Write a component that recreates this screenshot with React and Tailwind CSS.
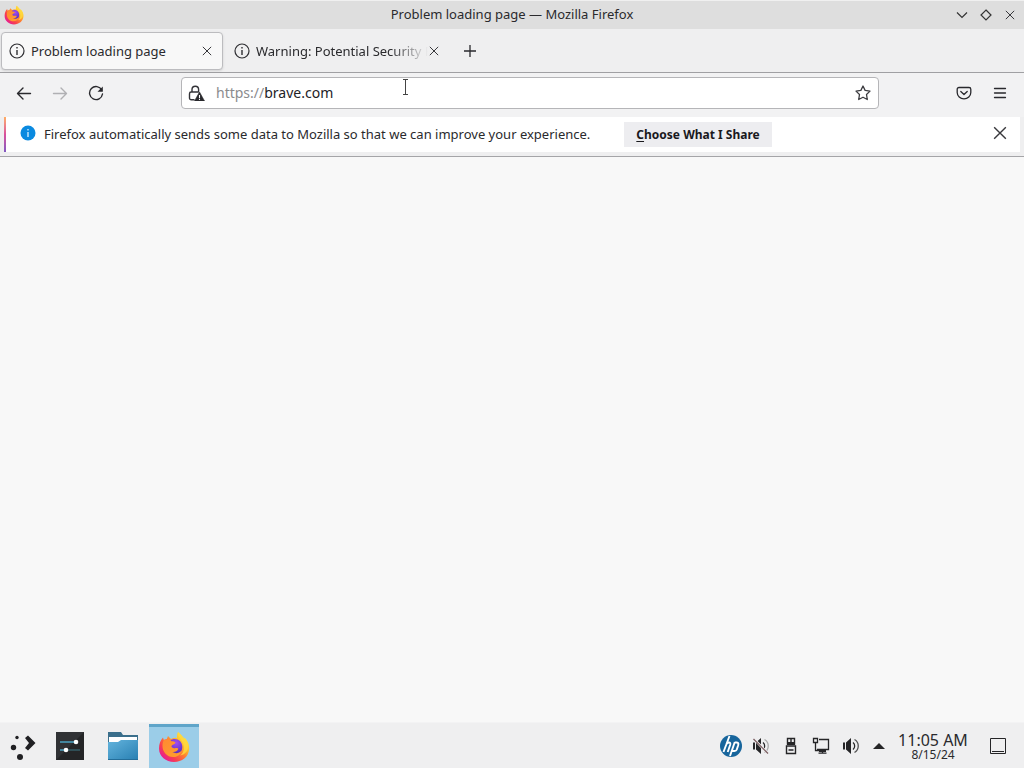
import React from "react";

const iconButton = "flex size-8 shrink-0 items-center justify-center";

function FirefoxLogo({ id, className }) {
  return (
    <svg viewBox="0 0 32 32" className={className} aria-hidden="true">
      <defs>
        <linearGradient id={id + "body"} x1="0.9" y1="0.1" x2="0.15" y2="0.85">
          <stop offset="0" stopColor="#fff04a" />
          <stop offset="0.28" stopColor="#ffc12c" />
          <stop offset="0.52" stopColor="#ff7a32" />
          <stop offset="0.78" stopColor="#f8404f" />
          <stop offset="1" stopColor="#e8208a" />
        </linearGradient>
        <radialGradient id={id + "globe"} cx="0.6" cy="0.25" r="0.8">
          <stop offset="0" stopColor="#a24df0" />
          <stop offset="0.6" stopColor="#6a35cf" />
          <stop offset="1" stopColor="#4b2aa5" />
        </radialGradient>
        <linearGradient id={id + "fox"} x1="0" y1="0" x2="1" y2="1">
          <stop offset="0" stopColor="#ff8a32" />
          <stop offset="1" stopColor="#ffa02c" />
        </linearGradient>
      </defs>
      <path
        d="M20 1c3 2 4.500 5 5 7l2-1c3 3 4.500 7 4.200 11C30.600 26 24 31 16 31S1 25.500 1 17.500C1 13 2.500 9 5 6.500l.8 2.500 3-1 1.200-3 3 3c2-1 4-1.500 6-1-.3-2 0-4 1-6z"
        fill={"url(#" + id + "body)"}
      />
      <path
        d="M12.500 9.500c2.500-2.300 7-2 9.500.5 2.800 3 3.200 8 .5 11.200-2.700 3.300-8.500 3.500-11.500.5-2-2-2.500-4-2-6z"
        fill={"url(#" + id + "globe)"}
      />
      <path
        d="M5.800 9c3-1.300 5.800-.8 7.700 1.200 1.800 0 3.400.4 4 1.300-.5 1.900-3.500 2-4 3.500-.2 1.500 1.600 2.600 3.500 2.200 1.500-.4 3-.2 3.400.6-1.200 2.600-3.500 3.600-6 3.200 3.300 2 7 1.200 9-1.300-.8 4-4 6.300-8.400 6.300C9 26 4.500 21 4.500 15c0-2.500.5-4.500 1.300-6z"
        fill={"url(#" + id + "fox)"}
      />
      <path
        d="M20 1c-1 5 5.500 8 6 15 .2 4-1.500 7-4 8.500 5.500-1 9-5.500 8-11.500C28.500 8 24 5 20 1z"
        fill="#ffd83d"
        opacity="0.85"
      />
    </svg>
  );
}

function InfoOutline() {
  return (
    <svg viewBox="0 0 16 16" className="size-4 shrink-0" fill="none" stroke="#2e2e32" aria-hidden="true">
      <circle cx="8" cy="8" r="7" strokeWidth="1.200" />
      <path d="M8 7v5" strokeWidth="1.400" />
      <path d="M8 4v1.500" strokeWidth="1.400" />
    </svg>
  );
}

function Cross({ className }) {
  return (
    <svg viewBox="0 0 12 12" className={className} fill="none" stroke="#38383c" strokeWidth="1.200" aria-hidden="true">
      <path d="M1 1l10 10M11 1L1 11" />
    </svg>
  );
}

function Tab({ title, active }) {
  return (
    <div
      className={
        active
          ? "mr-[3px] ml-px flex h-[38px] w-[222px] items-center rounded border border-[#bcbcbf] bg-[#f8f8f8] pr-[9px] pl-[7px] shadow-sm"
          : "flex h-[38px] w-[222px] items-center pr-2 pl-2"
      }
    >
      <InfoOutline />
      <button role="tab" aria-selected={active} className="ml-1.5 min-w-0 flex-1 pt-0.5 text-left whitespace-nowrap">
        <span className={active ? "block" : "block overflow-hidden [mask-image:linear-gradient(to_right,black_78%,transparent)]"}>{title}</span>
      </button>
      <button aria-label="Close tab" className="flex h-4 w-3 shrink-0 items-center justify-center">
        <Cross className="size-2.5" />
      </button>
    </div>
  );
}

function TitleBar() {
  return (
    <header className="grid h-[29px] grid-cols-[1fr_auto_1fr] items-center border-t border-[#f0f0f0] bg-[#dedede]">
      <FirefoxLogo id="window" className="ml-1 size-5" />
      <h1>Problem loading page — Mozilla Firefox</h1>
      <div className="flex justify-end pr-0.5">
        <button aria-label="Minimize" className="flex size-6 items-center justify-center">
          <svg viewBox="0 0 12 12" className="size-3" fill="none" stroke="#333" strokeWidth="1.200"><path d="M1 3.500l5 5 5-5" /></svg>
        </button>
        <button aria-label="Maximize" className="flex size-6 items-center justify-center">
          <svg viewBox="0 0 12 12" className="size-3" fill="none" stroke="#333" strokeWidth="1.200"><path d="M6 1l5 5-5 5-5-5z" /></svg>
        </button>
        <button aria-label="Close window" className="flex size-6 items-center justify-center"><Cross className="size-2.5" /></button>
      </div>
    </header>
  );
}

function NavBar() {
  return (
    <nav className="flex h-11 items-center bg-[#f2f2f3] px-2 pb-1">
      <div className="flex gap-1">
        <button aria-label="Back" className={iconButton}>
          <svg viewBox="0 0 16 16" className="size-4" fill="none" stroke="#29292d" strokeWidth="1.400" strokeLinecap="round" strokeLinejoin="round"><path d="M14.500 8.500H1.500M7 3L1.500 8.500 7 14" /></svg>
        </button>
        <button aria-label="Forward" disabled className={iconButton}>
          <svg viewBox="0 0 16 16" className="size-4" fill="none" stroke="#b0b0b3" strokeWidth="1.400" strokeLinecap="round" strokeLinejoin="round"><path d="M1.500 8.500h13M9 3l5.500 5.500L9 14" /></svg>
        </button>
        <button aria-label="Reload" className={iconButton}>
          <svg viewBox="0 0 16 16" className="size-4" fill="none" stroke="#29292d" strokeWidth="1.400" strokeLinecap="round"><path d="M13.800 5A6.500 6.500 0 1 0 14.500 9" /><path d="M14.800 1.500v5.300H9.500z" fill="#29292d" stroke="none" /></svg>
        </button>
      </div>
      <div className="relative mr-[69px] ml-[69px] flex h-8 min-w-0 flex-1 items-center rounded border border-[#b5b5b8] bg-white pr-[7px] pl-1.5 text-sm">
        <button aria-label="Connection is not secure" className="shrink-0">
          <svg viewBox="0 0 18 16" className="h-4 w-[18px]" fill="none" stroke="#333338" strokeWidth="1.400">
            <path d="M4 7V4.500a3.300 3.300 0 0 1 6.600 0V7M6.500 14.700H3.200A1.700 1.700 0 0 1 1.500 13V8.700C1.500 7.700 2.300 7 3.200 7h7.600" />
            <path d="M11.500 7l5 9h-10z" fill="#29292d" stroke="#29292d" strokeWidth=".6" strokeLinejoin="round" />
            <path d="M11.500 10v3M11.500 13.800V15" stroke="#fff" strokeWidth="1.100" />
          </svg>
        </button>
        <label htmlFor="address" className="ml-2.5 text-[#8b8b8e]">https://</label>
        <input id="address" defaultValue="brave.com" spellCheck={false} className="min-w-0 flex-1 bg-transparent text-[#222226] outline-none" />
        <button aria-label="Bookmark this page" className="shrink-0">
          <svg viewBox="0 0 16 16" className="size-4" fill="none" stroke="#3c3c40" strokeWidth="1.300" strokeLinejoin="round"><path d="M8 1l2.100 4.400 4.900.7-3.500 3.400.8 5L8 12.200l-4.300 2.300.8-5L1 6.100l4.900-.7z" /></svg>
        </button>
        <svg viewBox="0 0 8 18" className="pointer-events-none absolute top-0 left-[220px] h-[18px] w-2" fill="none" stroke="#444" aria-hidden="true">
          <path d="M1 1.500h5M3.500 2v14M1 16.500h5" />
        </svg>
      </div>
      <div className="flex gap-1">
        <button aria-label="Save to Pocket" className={iconButton}>
          <svg viewBox="0 0 16 16" className="size-4" fill="none" stroke="#29292d" strokeWidth="1.300" strokeLinecap="round" strokeLinejoin="round"><path d="M3 2.500h10a1.800 1.800 0 0 1 1.800 1.800V7.500a6.800 6.300 0 0 1-13.600 0V4.300A1.800 1.800 0 0 1 3 2.500z" /><path d="M4.800 6.500L8 9.500l3.200-3" /></svg>
        </button>
        <button aria-label="Open application menu" className={iconButton}>
          <svg viewBox="0 0 16 16" className="size-4" fill="none" stroke="#29292d" strokeWidth="1.300" strokeLinecap="round"><path d="M2.500 3.500h11M2.500 8h11M2.500 12.500h11" /></svg>
        </button>
      </div>
    </nav>
  );
}

function Notification() {
  return (
    <section className="border-b border-[#a5a5a8] bg-[#efeff0] pr-1 pb-1 pl-1">
      <div className="flex h-[35px] items-center bg-white pr-3">
        <div className="h-full w-0.5 bg-gradient-to-b from-[#ffae62] via-[#d94f9c] to-[#8158c2]" />
        <svg viewBox="0 0 16 16" className="mb-1 ml-3.5 size-4 shrink-0" aria-hidden="true">
          <circle cx="8" cy="8" r="7.500" fill="#0a8ae0" />
          <path d="M8 7v5M8 4v1.500" stroke="#c9eaff" strokeWidth="1.400" />
        </svg>
        <p className="ml-2">Firefox automatically sends some data to Mozilla so that we can improve your experience.</p>
        <button className="ml-[34px] h-[25px] shrink-0 bg-[#ededf0] px-3 text-xs font-bold text-[#19191d]">
          <span className="underline underline-offset-2">C</span>hoose What I Share
        </button>
        <button aria-label="Dismiss" className="mb-1 ml-auto flex h-5 w-4 shrink-0 items-center justify-center">
          <Cross className="size-3.5" />
        </button>
      </div>
    </section>
  );
}

function Speaker({ muted }) {
  return (
    <svg viewBox="0 0 18 18" className="size-[18px]" fill="none" stroke="#252527" strokeWidth="1.300" aria-hidden="true">
      <path d="M1 5.500h2v7H1zM4 5.500L9 1v16l-5-4.500z" fill="#252527" stroke="none" />
      <path d="M11 5.500a4.500 4.500 0 0 1 0 7" />
      <path d="M12.500 2.500a7.500 7.500 0 0 1 0 13" stroke={muted ? "#aaa" : "#555"} />
      {muted && <path d="M2 2l14 14.500" stroke="#efeff0" strokeWidth="2.500" />}
      {muted && <path d="M1.500 2l14.500 14.500" stroke="#78595c" strokeWidth="1.200" />}
    </svg>
  );
}

function Taskbar() {
  return (
    <footer className="flex h-[46px] shrink-0 items-stretch justify-between border-t border-[#f3f3f4] bg-[#efeff0]">
      <div className="flex items-stretch">
        <button aria-label="Application launcher" className="flex w-[43px] items-center justify-center">
          <svg viewBox="0 0 28 28" className="size-7" fill="#202023">
            <circle cx="9" cy="5.500" r="1.700" /><circle cx="5.500" cy="15.500" r="2.700" /><circle cx="12" cy="25" r="3" />
            <path d="M17 6l3-2.500 7.500 7.500-7.500 7.500-3-2.500 4-5z" />
          </svg>
        </button>
        <button aria-label="System settings" className="flex w-[53px] items-center justify-center">
          <svg viewBox="0 0 28 28" className="size-7">
            <path fill="#303235" d="M0 0h28v28H0z" /><path fill="#242527" d="M0 28L28 0v28z" />
            <path d="M4 10h15M4 18h6" stroke="#4aa3c2" strokeWidth="1.400" />
            <path d="M12 18h12" stroke="#36606c" strokeWidth="1.400" />
            <circle cx="20" cy="10" r="2.300" fill="#fff" /><circle cx="10" cy="18" r="2.300" fill="#fff" />
          </svg>
        </button>
        <button aria-label="File manager" className="flex w-[53px] items-center justify-center">
          <svg viewBox="0 0 30 28" className="h-7 w-[30px]">
            <defs><linearGradient id="folder" x1="0" y1="0" x2="1" y2="1"><stop stopColor="#64b4dd" /><stop offset="1" stopColor="#287fb2" /></linearGradient></defs>
            <path d="M0 0h13l2 3h15v8H0z" fill="#3b6f8c" />
            <path d="M1 5h28v7H1z" fill="#fff" />
            <path d="M0 10h10l3-2h17v20H0z" fill="url(#folder)" />
            <path d="M0 27h30v1H0z" fill="#236d99" />
          </svg>
        </button>
        <button aria-label="Firefox" className="mt-px flex w-[50px] items-center justify-center border-t-[3px] border-[#5fa5c9] bg-[#9bcde8]">
          <FirefoxLogo id="task" className="mb-0.5 size-8" />
        </button>
      </div>
      <div className="flex items-center pr-3.5">
        <button aria-label="HP device manager" className="flex w-[30px] justify-center">
          <svg viewBox="0 0 22 22" className="size-[22px]">
            <circle cx="11" cy="11" r="11" fill="#17659c" />
            <path d="M9.500 1L3.500 17M6 10c1.300-3.300 5.200-3.300 4.200-.2L7.700 17M14.800 7L10 21M14.800 7.500h2c2 0 1.700 1.500 1.300 3L16.800 14.500c-.4 1.300-1.300 1.500-2.500 1.500h-2" fill="none" stroke="#fff" strokeWidth="1.900" />
          </svg>
        </button>
        <button aria-label="Audio muted" className="flex w-[30px] justify-center"><Speaker muted /></button>
        <button aria-label="Removable devices" className="flex w-[30px] justify-center">
          <svg viewBox="0 0 12 18" className="h-[18px] w-3" fill="none" stroke="#252527" strokeWidth="1.400">
            <path d="M2.500 1.500h7V7h-7zM1.500 9h9v7.500h-9zM3.500 13h5" />
            <path d="M2 5h8v3H2zM5.300 2h1.400v4H5.300z" fill="#252527" stroke="none" />
          </svg>
        </button>
        <button aria-label="Network" className="flex w-[30px] justify-center">
          <svg viewBox="0 0 18 18" className="size-[18px]" fill="none" stroke="#252527" strokeWidth="1.300">
            <path d="M7 2.500h9.500v10H5M1.500 1.500h4v4h-4zM3.500 5.500v8h4M10.500 13v3M6.500 16.200h8" /><path d="M7 13h7v2H7z" fill="#252527" stroke="none" />
          </svg>
        </button>
        <button aria-label="Volume" className="flex w-[30px] justify-center"><Speaker /></button>
        <button aria-label="Show hidden icons" className="flex w-[26px] justify-center">
          <svg viewBox="0 0 12 6" className="h-1.5 w-3" fill="#252527"><path d="M0 6l6-6 6 6z" /></svg>
        </button>
        <button className="mx-1.5 flex w-[70px] flex-col items-center pt-0.5 whitespace-nowrap">
          <span className="text-base leading-4">11:05 AM</span>
          <span className="text-xs leading-[14px]">8/15/24</span>
        </button>
        <button aria-label="Show desktop" className="ml-3 flex w-6 justify-center">
          <svg viewBox="0 0 16 16" className="size-4" fill="none" stroke="#252527"><path d="M.5.500h15v15H.5zM2 13.500h12" /></svg>
        </button>
      </div>
    </footer>
  );
}

export default function App() {
  return (
    <div className="flex min-h-screen flex-col bg-[#f8f8f8] font-['Noto_Sans',sans-serif] text-[13px] text-[#2a2a2d]">
      <TitleBar />
      <div className="flex h-11 items-center border-b border-[#a0a0a3] bg-[#efeff0]">
        <div role="tablist" className="flex">
          <Tab title="Problem loading page" active />
          <Tab title="Warning: Potential Security Risk" />
        </div>
        <button aria-label="Open a new tab" className="ml-1.5 flex size-8 items-center justify-center">
          <svg viewBox="0 0 12 12" className="size-3" fill="none" stroke="#29292d" strokeWidth="1.300"><path d="M6 0v12M0 6h12" /></svg>
        </button>
      </div>
      <NavBar />
      <Notification />
      <main className="flex-1" />
      <Taskbar />
    </div>
  );
}
